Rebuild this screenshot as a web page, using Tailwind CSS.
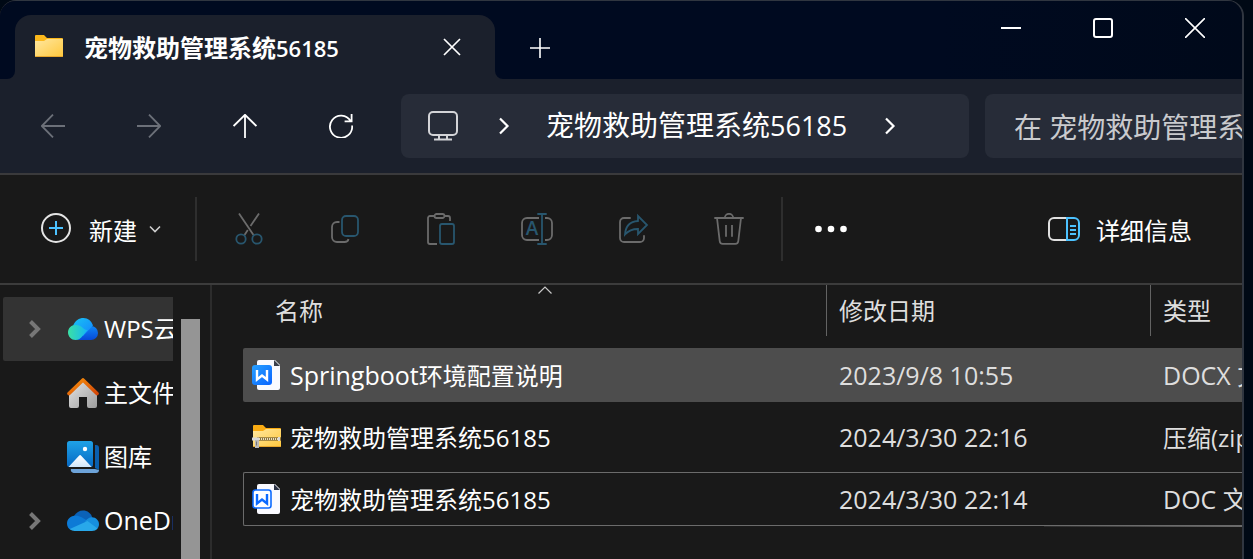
<!DOCTYPE html>
<html lang="zh-CN">
<head>
    <meta charset="UTF-8">
    <meta name="viewport" content="width=device-width, initial-scale=1.0">
    <title>宠物救助管理系统56185</title>
    <script src="https://cdn.jsdelivr.net/npm/@tailwindcss/browser@4"></script>
</head>
<body class="h-screen overflow-hidden bg-[#000915] pr-[9px] font-['Open_Sans','Noto_Sans_CJK_SC',sans-serif] text-2xl text-white">
    <div class="flex h-full flex-col overflow-hidden rounded-t-2xl border-t border-r-2 border-[#303640] bg-[#191919]">

        <!-- Title bar with tabs -->
        <header class="flex h-[78px] shrink-0 bg-[#1b202c]">
            <div class="w-[15px] rounded-br-lg bg-[#000a20]"></div>
            <div class="w-[480px] bg-[#000a20] pt-3.5">
                <div class="flex h-16 items-center rounded-t-2xl bg-[#1b202c] pr-[27px] pl-5">
                    <svg class="size-7 shrink-0" viewBox="0 0 28 28">
                        <defs>
                            <linearGradient id="folder" x1="0" y1="0" x2="1" y2="1">
                                <stop offset="0" stop-color="#ffe7a0"/>
                                <stop offset="1" stop-color="#ffc83d"/>
                            </linearGradient>
                        </defs>
                        <path d="M0 3a1 1 0 0 1 1-1h8l3 3h15a1 1 0 0 1 1 1v4H0z" fill="#fbb81c"/>
                        <path d="M0 8h9l3-2h16v17a1 1 0 0 1-1 1H1a1 1 0 0 1-1-1z" fill="url(#folder)"/>
                        <path d="M0 23h28a1 1 0 0 1-1 1H1a1 1 0 0 1-1-1z" fill="#e9a72c"/>
                    </svg>
                    <span class="ml-[21px] flex-1 whitespace-nowrap pt-0.5 font-semibold">宠物救助管理系统<span class="text-[22px]">56185</span></span>
                    <button aria-label="关闭标签页" class="flex size-8 items-center justify-center">
                        <svg class="size-[18px]" viewBox="0 0 18 18" fill="none" stroke="#fff" stroke-width="1.7"><path d="M1 1l16 16M17 1L1 17"/></svg>
                    </button>
                </div>
            </div>
            <div class="flex flex-1 items-start justify-between rounded-bl-lg bg-linear-to-r from-[#000a20] from-60% to-[#00091a] pr-px">
                <button aria-label="新建标签页" class="mt-[27px] ml-[25px] flex size-10 items-center justify-center p-0">
                    <svg class="size-5" viewBox="0 0 20 20" fill="none" stroke="#fff" stroke-width="1.6"><path d="M10 0v20M0 10h20"/></svg>
                </button>
                <div class="flex">
                    <button aria-label="最小化" class="flex h-[54px] w-[92px] items-center justify-center">
                        <svg class="size-5" viewBox="0 0 20 20" stroke="#fff" stroke-width="2"><path d="M0 10h20"/></svg>
                    </button>
                    <button aria-label="最大化" class="flex h-[54px] w-[92px] items-center justify-center">
                        <svg class="size-5" viewBox="0 0 20 20" fill="none" stroke="#fff" stroke-width="2"><rect x="1" y="1" width="18" height="18" rx="2"/></svg>
                    </button>
                    <button aria-label="关闭" class="flex h-[54px] w-[92px] items-center justify-center">
                        <svg class="size-5" viewBox="0 0 20 20" fill="none" stroke="#fff" stroke-width="1.6"><path d="M0 0l20 20M20 0L0 20"/></svg>
                    </button>
                </div>
            </div>
        </header>

        <!-- Navigation and address bar -->
        <nav class="flex h-24 shrink-0 items-start border-b-2 border-[#3a3a3c] bg-[#1b202c] pt-[15px] pl-[5px]">
            <button aria-label="后退" class="flex h-16 w-24 items-center justify-center text-[#6c7079]">
                <svg class="size-6" viewBox="0 0 24 24" fill="none" stroke="currentColor" stroke-width="1.8"><path d="M24 12H1M12 .6L.8 12 12 23.4"/></svg>
            </button>
            <button aria-label="前进" class="flex h-16 w-24 items-center justify-center text-[#6c7079]">
                <svg class="size-6" viewBox="0 0 24 24" fill="none" stroke="currentColor" stroke-width="1.8"><path d="M0 12h23M12 .6L23.2 12 12 23.4"/></svg>
            </button>
            <button aria-label="向上" class="flex h-16 w-24 items-center justify-center">
                <svg class="size-6" viewBox="0 0 24 24" fill="none" stroke="currentColor" stroke-width="1.8"><path d="M12 24V1M.6 12L12 .8 23.4 12"/></svg>
            </button>
            <button aria-label="刷新" class="flex h-16 w-24 items-center justify-center">
                <svg class="size-6" viewBox="0 0 24 24" fill="none" stroke="currentColor" stroke-width="1.8"><path d="M23.1 11.5A11.1 11.1 0 1 1 21.6 7M22.6 0v7.4h-7"/></svg>
            </button>
            <div class="ml-3 flex h-16 flex-1 items-center rounded-lg bg-[#272c38] text-[28px]">
                <svg class="ml-[27px] size-[30px] shrink-0" viewBox="0 0 30 30" fill="none" stroke="#d3d4d7" stroke-width="2"><rect x="1" y="1" width="28" height="23" rx="4"/><path d="M11 24v4M19 24v4M6 28.500h18"/></svg>
                <svg class="ml-10 h-[18px] w-3 shrink-0" viewBox="0 0 12 18" fill="none" stroke="#fff" stroke-width="2.2"><path d="M2 1.500L9.500 9 2 16.500"/></svg>
                <a href="#" class="ml-9 whitespace-nowrap">宠物救助管理系统<span class="text-[27px]">56185</span></a>
                <svg class="ml-[37px] h-[18px] w-3 shrink-0" viewBox="0 0 12 18" fill="none" stroke="#fff" stroke-width="2.2"><path d="M2 1.500L9.500 9 2 16.500"/></svg>
            </div>
            <input type="text" aria-label="搜索" placeholder="在 宠物救助管理系统56185 中搜索" class="ml-4 h-16 w-[257px] rounded-l-lg bg-[#272c38] pt-0.5 pl-[29px] text-[28px] outline-none placeholder:text-[#c9cacd]">
        </nav>

        <!-- Command bar -->
        <div class="flex h-[110px] shrink-0 items-center border-b-2 border-[#3c3c3c] pr-[50px]">
            <button class="ml-10 flex h-16 items-center">
                <svg class="size-8" viewBox="0 0 32 32" fill="none" stroke-width="2"><circle cx="16" cy="15" r="14" stroke="#e4e4e4"/><path d="M16 8v14M9 15h14" stroke="#4cc2ff"/></svg>
                <span class="ml-[17px] pt-1">新建</span>
                <svg class="ml-3 h-2 w-3" viewBox="0 0 12 8" fill="none" stroke="#ccc" stroke-width="1.6"><path d="M1 1.500l5 5 5-5"/></svg>
            </button>
            <div class="ml-[34px] h-16 w-0.5 bg-[#2e2e2e]"></div>
            <div class="ml-1 flex">
                <button aria-label="剪切" class="flex h-16 w-24 items-center justify-center">
                    <svg class="size-8" viewBox="0 0 32 32" fill="none" stroke="#6b6b6b" stroke-width="1.800"><path d="M6 .5L20.500 22M26 .5l-8.500 12.600M14.800 17L11.500 22"/><g stroke="#28566e"><circle cx="8" cy="26" r="4.700"/><circle cx="24" cy="26" r="4.700"/></g></svg>
                </button>
                <button aria-label="复制" class="flex h-16 w-24 items-center justify-center">
                    <svg class="size-8" viewBox="0 0 32 32" fill="none" stroke="#6b6b6b" stroke-width="1.800"><path d="M10.500 9H8a5 5 0 0 0-5 5v10a5 5 0 0 0 5 5h7.500q3.500 0 4-3"/><rect x="13" y="3" width="16" height="20" rx="4" stroke="#28566e"/></svg>
                </button>
                <button aria-label="粘贴" class="flex h-16 w-24 items-center justify-center">
                    <svg class="size-8" viewBox="0 0 32 32" fill="none" stroke="#6b6b6b" stroke-width="1.800"><path d="M9 3H5a2 2 0 0 0-2 2v24a2 2 0 0 0 2 2h7M19.500 3H23a2 2 0 0 1 2 2v3"/><rect x="9.500" y="1" width="10" height="4" rx="2"/><rect x="15" y="11" width="14" height="20" rx="2" stroke="#28566e"/></svg>
                </button>
                <button aria-label="重命名" class="flex h-16 w-24 items-center justify-center">
                    <svg class="size-8" viewBox="0 0 32 32" fill="none" stroke="#6b6b6b" stroke-width="1.800"><path d="M18 5H6a5 5 0 0 0-5 5v12a5 5 0 0 0 5 5h12M24 5h2a5 5 0 0 1 5 5v12a5 5 0 0 1-5 5h-2"/><path d="M21 1v30M16.300 1h9.400M16.300 31h9.400" stroke="#28566e"/><text x="11" y="22" text-anchor="middle" fill="#28566e" stroke="none" class="text-[19px] font-semibold">A</text></svg>
                </button>
                <button aria-label="共享" class="flex h-16 w-24 items-center justify-center">
                    <svg class="size-8" viewBox="0 0 32 32" fill="none" stroke="#6b6b6b" stroke-width="1.800"><path d="M13.700 5H7a4 4 0 0 0-4 4v16a4 4 0 0 0 4 4h16a4 4 0 0 0 4-4v-2.700"/><path d="M21 3l9 9-9 9v-5C15 16 11.500 17.500 8 21.500 8.500 13.500 13 8.500 21 8z" stroke="#28566e"/></svg>
                </button>
                <button aria-label="删除" class="flex h-16 w-24 items-center justify-center">
                    <svg class="size-8" viewBox="0 0 32 32" fill="none" stroke="#6b6b6b" stroke-width="1.800"><path d="M1.300 5h29.400M11.800 5a4.200 4.200 0 0 1 8.400 0M4 5l2.700 23a3 3 0 0 0 3 2.800h12.600a3 3 0 0 0 3-2.800L28 5M13 12v11.700M19 12v11.700"/></svg>
                </button>
            </div>
            <div class="ml-1 h-16 w-0.5 bg-[#2e2e2e]"></div>
            <button aria-label="查看更多" class="flex h-16 w-24 items-center justify-center">
                <svg class="h-8 w-8" viewBox="0 0 32 32" fill="#fff"><circle cx="3.500" cy="16" r="3.300"/><circle cx="16" cy="16" r="3.300"/><circle cx="28.500" cy="16" r="3.300"/></svg>
            </button>
            <button class="ml-auto flex h-16 items-center">
                <svg class="size-8" viewBox="0 0 32 32" fill="none" stroke-width="2"><path d="M19 5H6a5 5 0 0 0-5 5v12a5 5 0 0 0 5 5h13" stroke="#e0e0e0"/><path d="M19 5h7a5 5 0 0 1 5 5v12a5 5 0 0 1-5 5h-7zM22 13h6M22 17h6M22 21h6" stroke="#4cc2ff"/></svg>
                <span class="ml-4 pt-1">详细信息</span>
            </button>
        </div>

        <div class="flex min-h-0 flex-1">
            <!-- Sidebar -->
            <aside class="flex w-[212px] shrink-0 border-r-2 border-[#2c2c2c]">
                <ul class="ml-[3px] w-[170px] overflow-hidden pt-3">
                    <li class="flex h-16 items-center rounded-l-xs bg-[#333] whitespace-nowrap">
                        <svg class="ml-[26px] h-[18px] w-3 shrink-0" viewBox="0 0 12 18" fill="none" stroke="#777" stroke-width="4"><path d="M1.500 1.500L9 9l-7.500 7.500"/></svg>
                        <svg class="ml-[26px] size-8 shrink-0" viewBox="0 0 32 32">
                            <defs>
                                <linearGradient id="wpsLeft" x1="0" y1="0" x2="1" y2="0"><stop offset="0" stop-color="#3be0a4"/><stop offset="1" stop-color="#14b8f5"/></linearGradient>
                                <linearGradient id="wpsTop" x1="0" y1="0" x2="1" y2="1"><stop offset="0" stop-color="#18c3f2"/><stop offset="1" stop-color="#1583ff"/></linearGradient>
                                <linearGradient id="wpsRight" x1="0" y1="0" x2="0" y2="1"><stop offset="0" stop-color="#0f86f5"/><stop offset="1" stop-color="#0749d8"/></linearGradient>
                            </defs>
                            <path d="M10 27l12-14h2a7 7 0 0 1 0 14z" fill="url(#wpsRight)"/>
                            <path d="M6 13C8 7.500 12 5 16.500 5 21 5 24.500 8 26 12.500L16 23z" fill="url(#wpsTop)"/>
                            <path d="M8.500 12C4 12 1 15.500 1 19.500S4.500 27 8.500 27c3 0 5-1.500 7-4l5-6c-4 .5-5-5-12-5z" fill="url(#wpsLeft)"/>
                        </svg>
                        <a href="#" class="ml-[5px]">WPS云盘</a>
                    </li>
                    <li class="flex h-16 items-center whitespace-nowrap">
                        <svg class="ml-16 size-8 shrink-0" viewBox="0 0 32 32">
                            <defs>
                                <linearGradient id="wall" x1="0" y1="0" x2="1" y2="1"><stop offset="0" stop-color="#e6e6e6"/><stop offset="1" stop-color="#9c9c9c"/></linearGradient>
                                <linearGradient id="roof" x1="0" y1="0" x2="1" y2="1"><stop offset="0" stop-color="#f7900a"/><stop offset="1" stop-color="#d44708"/></linearGradient>
                            </defs>
                            <path d="M2 15L16 3l14 12v14a2 2 0 0 1-2 2h-6a2 2 0 0 1-2-2v-9h-8v9a2 2 0 0 1-2 2H4a2 2 0 0 1-2-2z" fill="url(#wall)"/>
                            <path d="M2 16.500L16 3l14 13.500" fill="none" stroke="url(#roof)" stroke-width="3.600" stroke-linecap="round" stroke-linejoin="round"/>
                        </svg>
                        <a href="#" class="ml-[5px]">主文件夹</a>
                    </li>
                    <li class="flex h-16 items-center whitespace-nowrap">
                        <svg class="ml-16 size-8 shrink-0" viewBox="0 0 32 32">
                            <defs>
                                <linearGradient id="photo" x1="0" y1="0" x2="0" y2="1"><stop offset="0" stop-color="#1fa2e6"/><stop offset="1" stop-color="#0669c4"/></linearGradient>
                                <linearGradient id="hill" x1="0" y1="0" x2="0" y2="1"><stop offset="0" stop-color="#fff"/><stop offset="1" stop-color="#cfe6fb"/></linearGradient>
                            </defs>
                            <path d="M28 4h1a3 3 0 0 1 3 3v22l-4-2z" fill="#0a5fae"/>
                            <path d="M4 28h24l4 1a3 3 0 0 1-3 3H7a3 3 0 0 1-3-4z" fill="#6da3d9"/>
                            <rect width="26" height="26" rx="2.500" fill="url(#photo)"/>
                            <path d="M1.500 26L12 14.700a1.500 1.500 0 0 1 2.200 0L24.700 26z" fill="url(#hill)"/>
                            <circle cx="18" cy="8" r="2.200" fill="#fff"/>
                        </svg>
                        <a href="#" class="ml-[5px]">图库</a>
                    </li>
                    <li class="flex h-16 items-center whitespace-nowrap">
                        <svg class="ml-[26px] h-[18px] w-3 shrink-0" viewBox="0 0 12 18" fill="none" stroke="#777" stroke-width="4"><path d="M1.500 1.500L9 9l-7.500 7.500"/></svg>
                        <svg class="ml-[26px] size-8 shrink-0" viewBox="0 0 32 32">
                            <path d="M7 11C9 7.500 12.500 5.500 16 5.500c4.500 0 8 2.700 9.300 7L17 19z" fill="#0b62b8"/>
                            <path d="M7.500 10.800C12 10 15 12 22 17L4 25c-2.500-1-4-3.600-4-6.500 0-4 3.300-7.400 7.500-7.700z" fill="#0c7ad6"/>
                            <path d="M25 12.300c4 .1 7 3.300 7 7 0 2-1 4-2.500 5.200L18 16.500c2-2.500 4-4.200 7-4.200z" fill="#168fde"/>
                            <path d="M2.800 24L20.500 16 30.500 23.500c-1.400 1.700-3.300 2.500-5.500 2.500H7.500c-1.800 0-3.400-.8-4.700-2z" fill="#28a8ea"/>
                        </svg>
                        <a href="#" class="ml-[5px] text-[25px]">OneDrive</a>
                    </li>
                </ul>
                <div class="mt-[34px] ml-2 w-[19px] bg-[#959595]"></div>
            </aside>

            <!-- File list -->
            <main class="relative min-w-0 flex-1 pl-[31px]">
                <svg class="absolute top-px left-[326px] h-2 w-[14px]" viewBox="0 0 14 8" fill="none" stroke="#c8c8c8" stroke-width="1.200"><path d="M.5 7.500L7 1l6.500 6.500"/></svg>
                <table class="-mt-2 w-full table-fixed border-separate border-spacing-x-0 border-spacing-y-2 text-left whitespace-nowrap text-[#dedede]">
                    <colgroup>
                        <col>
                        <col class="w-[324px]">
                        <col class="w-[91px]">
                    </colgroup>
                    <thead>
                        <tr>
                            <th class="p-0 pb-1 font-normal"><div class="flex h-[51px] items-center border-r border-[#636363] pt-px pl-8">名称</div></th>
                            <th class="p-0 pb-1 font-normal"><div class="flex h-[51px] items-center border-r border-[#636363] pt-px pl-3">修改日期</div></th>
                            <th class="p-0 pb-1 font-normal"><div class="flex h-[51px] items-center pt-px pl-3">类型</div></th>
                        </tr>
                    </thead>
                    <tbody>
                        <tr class="h-[54px] bg-[#4d4d4d]">
                            <td class="rounded-l-xs p-0">
                                <div class="flex items-center text-white">
                                    <svg class="ml-2 size-8" viewBox="0 0 32 32">
                                        <defs><linearGradient id="docx" x1="0" y1="0" x2="1" y2="1"><stop offset="0" stop-color="#27a1ff"/><stop offset="1" stop-color="#0a63ff"/></linearGradient></defs>
                                        <path d="M8 1h16l5 5v23a2 2 0 0 1-2 2H8a2 2 0 0 1-2-2V3a2 2 0 0 1 2-2z" fill="#fafaff"/>
                                        <path d="M23 1v6h6z" fill="#3b404c"/>
                                        <rect x="1" y="6" width="20" height="20" rx="3" fill="url(#docx)"/>
                                        <path d="M6 11v9.500l5-4 5 4V11" fill="none" stroke="#fff" stroke-width="2.400"/>
                                    </svg>
                                    <span class="ml-[7px] pt-0.5"><span class="text-[25px]">Springboot</span>环境配置说明</span>
                                </div>
                            </td>
                            <td class="p-0 pt-0.5 pl-3 text-[25px]">2023/9/8 10:55</td>
                            <td class="overflow-hidden p-0 pt-0.5 pl-3 text-[25px]">DOCX 文档</td>
                        </tr>
                        <tr class="h-[54px]">
                            <td class="p-0">
                                <div class="flex items-center text-white">
                                    <svg class="ml-2 size-8" viewBox="0 0 32 32">
                                        <path d="M2 5a1 1 0 0 1 1-1h9l3 3h14a1 1 0 0 1 1 1v4H2z" fill="#f9ab12"/>
                                        <path d="M2 10h10l3-2h15v17a1 1 0 0 1-1 1H3a1 1 0 0 1-1-1z" fill="url(#folder)"/>
                                        <path d="M2 25h28a1 1 0 0 1-1 1H3a1 1 0 0 1-1-1z" fill="#e9a72c"/>
                                        <path d="M6 18h24" stroke="#8d7338" stroke-width="3.500"/>
                                        <path d="M8 18h20" stroke="#e8dfc4" stroke-width="2.200" stroke-dasharray="1 1"/>
                                        <path d="M1 16.500h7v3H1zM27 16h2v4h-2z" fill="#d8d8d8"/>
                                        <path d="M4 19h4v8H4z" fill="#b9b9b9"/><path d="M5.500 20.500v4" stroke="#777" stroke-width="1"/>
                                    </svg>
                                    <span class="ml-[7px] pt-0.5">宠物救助管理系统56185</span>
                                </div>
                            </td>
                            <td class="p-0 pt-0.5 pl-3 text-[25px]">2024/3/30 22:16</td>
                            <td class="overflow-hidden p-0 pt-0.5 pl-3">压缩(zipped)</td>
                        </tr>
                        <tr class="h-[54px]">
                            <td class="rounded-l-xs border-y border-l border-[#6b6b6b] p-0">
                                <div class="flex items-center text-white">
                                    <svg class="ml-[7px] size-8" viewBox="0 0 32 32">
                                        <path d="M8 1h16l5 5v23a2 2 0 0 1-2 2H8a2 2 0 0 1-2-2V3a2 2 0 0 1 2-2z" fill="#fafaff"/>
                                        <path d="M23 1v6h6z" fill="#2c3344"/>
                                        <rect x="2" y="7" width="18" height="18" rx="2.500" fill="#fff" stroke="#0d6bff" stroke-width="1.600"/>
                                        <path d="M6 11v9.500l5-4 5 4V11" fill="none" stroke="#0d6bff" stroke-width="2.400"/>
                                    </svg>
                                    <span class="ml-[7px] pt-0.5">宠物救助管理系统56185</span>
                                </div>
                            </td>
                            <td class="border-y border-[#6b6b6b] p-0 pt-0.5 pl-3 text-[25px]">2024/3/30 22:14</td>
                            <td class="overflow-hidden border-y border-[#6b6b6b] p-0 pt-0.5 pl-3 text-[25px]">DOC 文档</td>
                        </tr>
                    </tbody>
                </table>
                <div class="-mt-2 ml-auto h-px w-[198px] bg-linear-to-r from-[#2c2c2c] to-[#6b6b6b]"></div>
            </main>
        </div>
    </div>
</body>
</html>
